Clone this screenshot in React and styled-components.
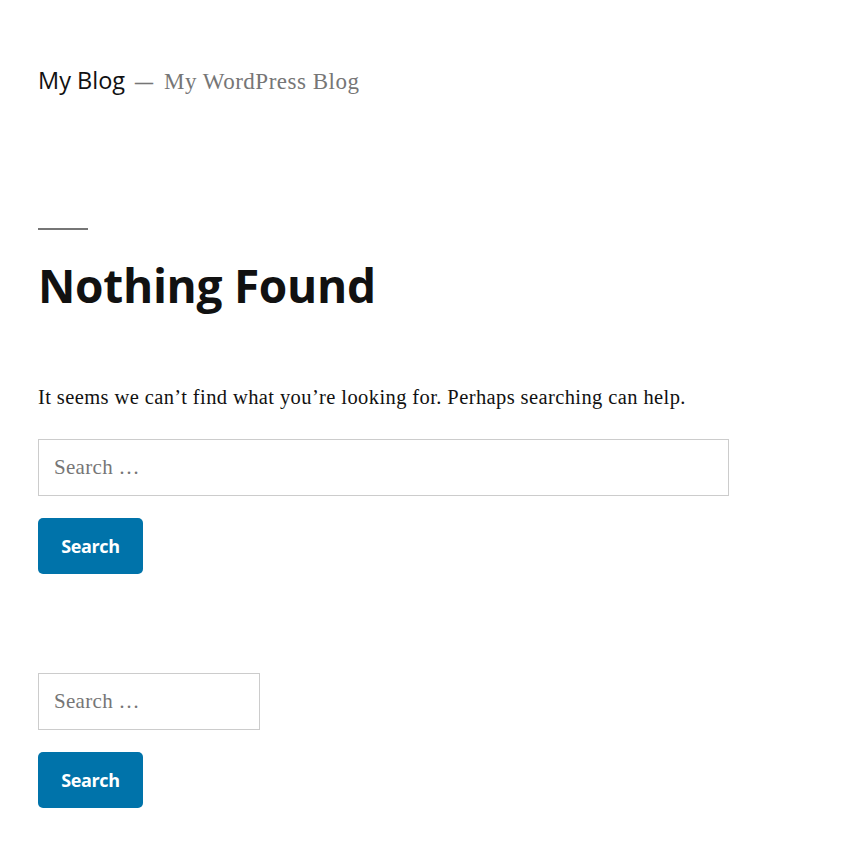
import React from "react"
import styled, { createGlobalStyle } from "styled-components"

const GlobalStyle = createGlobalStyle`
  body {
    margin: 0;
    background: #fff;
    color: #111;
  }
`

const sans = `"Open Sans", "Noto Sans", "Liberation Sans", sans-serif`
const serif = `"Liberation Serif", "DejaVu Serif", serif`

const Page = styled.div`
  padding: 0 38px;
  width: 859px;
  box-sizing: border-box;
`

const Header = styled.header`
  display: flex;
  align-items: baseline;
  padding-top: 64px;
  height: 164px;
  box-sizing: border-box;
`

const SiteTitle = styled.span`
  font-family: ${sans};
  font-size: 23.5px;
  color: #111;
`

const Dash = styled.span`
  font-family: ${sans};
  font-size: 20px;
  color: #767676;
  margin: 0 10px 0 9px;
`

const Tagline = styled.span`
  font-family: ${serif};
  font-size: 23px;
  letter-spacing: 0.5px;
  color: #767676;
`

const Main = styled.main`
  padding-top: 64px;
`

const Rule = styled.div`
  width: 50px;
  height: 2px;
  background: #767676;
`

const Title = styled.h1`
  font-family: ${sans};
  font-weight: 700;
  font-size: 46px;
  line-height: 1;
  margin: 32px 0 0;
  color: #111;
  letter-spacing: -0.3px;
`

const Text = styled.p`
  font-family: ${serif};
  font-size: 20.5px;
  letter-spacing: 0.4px;
  margin: 78px 0 0;
  color: #111;
`

const Form = styled.form`
  display: flex;
  flex-direction: column;
  align-items: flex-start;
  gap: 22px;
  margin-top: ${p => p.top}px;
`

const Input = styled.input`
  width: ${p => p.w}px;
  height: 57px;
  box-sizing: border-box;
  border: 1px solid #ccc;
  padding: 0 15px;
  font-family: ${serif};
  font-size: 21px;
  letter-spacing: 0.3px;
  color: #111;
  outline: none;
  &::placeholder {
    color: #767676;
  }
`

const Button = styled.button`
  width: 105px;
  height: 56px;
  border: none;
  border-radius: 5px;
  background: #0073aa;
  color: #fff;
  font-family: ${sans};
  font-weight: 700;
  font-size: 18px;
  letter-spacing: -0.4px;
  cursor: pointer;
`

const SearchForm = ({ w, top }) => (
  <Form top={top} onSubmit={e => e.preventDefault()}>
    <Input w={w} placeholder="Search …" />
    <Button type="submit">Search</Button>
  </Form>
)

const App = () => {
  return (
    <>
      <GlobalStyle />
      <Page>
        <Header>
          <SiteTitle>My Blog</SiteTitle>
          <Dash>—</Dash>
          <Tagline>My WordPress Blog</Tagline>
        </Header>
        <Main>
          <Rule />
          <Title>Nothing Found</Title>
          <Text>It seems we can’t find what you’re looking for. Perhaps searching can help.</Text>
          <SearchForm w={691} top={30} />
          <SearchForm w={222} top={99} />
        </Main>
      </Page>
    </>
  )
}

export default App
